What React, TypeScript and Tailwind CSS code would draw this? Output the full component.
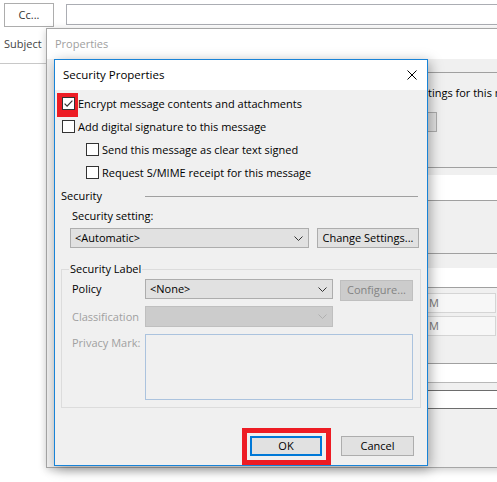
import React from 'react';

const ui = "font-['Open_Sans',sans-serif] text-[11px]";

const CheckBox = ({ checked }: { checked?: boolean }) => (
  <span className="relative z-10 flex h-[13px] w-[13px] shrink-0 items-center justify-center border border-[#333333] bg-white">
    {checked && (
      <svg width="11" height="11" viewBox="0 0 11 11">
        <path d="M1.6 5.6 L4.1 8.1 L9.4 2.6" fill="none" stroke="#333333" strokeWidth="1.2" />
      </svg>
    )}
  </span>
);

const Chevron = ({ color = '#333333' }: { color?: string }) => (
  <svg width="9" height="5" viewBox="0 0 9 5">
    <path d="M0.5 0.5 L4.5 4.5 L8.5 0.5" fill="none" stroke={color} strokeWidth="1" />
  </svg>
);

const Option = ({ label, checked, indent }: { label: string; checked?: boolean; indent?: boolean }) => (
  <div className={`flex h-[23px] items-center gap-[3px] ${indent ? 'pl-[31px]' : 'pl-[7px]'}`}>
    {checked ? (
      <span className="relative">
        <span className="absolute -left-[5px] -top-[4px] h-[24px] w-[21px] bg-[#ed1c24]" />
        <CheckBox checked />
      </span>
    ) : (
      <CheckBox />
    )}
    <span className="relative z-10 whitespace-nowrap leading-[16px] text-black">{label}</span>
  </div>
);

export default function App() {
  return (
    <div className={`relative h-[482px] w-[497px] overflow-hidden bg-white ${ui}`}>
      {/* compose header */}
      <div className="flex items-start pl-[4px] pt-[3px]">
        <button className="flex h-[24px] w-[50px] items-center justify-center border border-[#adadad] bg-white text-[#333333]">
          Cc...
        </button>
        <div className="ml-[12px] mt-[1px] h-[21px] flex-1 border border-r-0 border-[#abadb3] bg-white" />
      </div>
      <div className="h-[37px] w-[46px] border-b border-[#c8c8c8] pl-[4px] pt-[10px] leading-[14px] text-[#444444]">
        Subject
      </div>

      {/* Properties window */}
      <div className="absolute left-[46px] top-[28px] flex h-[440px] w-[470px] flex-col border border-[#a6a6a6] shadow-[0_2px_8px_rgba(0,0,0,0.2)]">
        <div className="flex h-[30px] items-center bg-white pl-[8px] text-[#a0a0a0]">Properties</div>
        <div className="flex flex-1 bg-[#f0f0f0]">
          <div className="w-[381px] shrink-0" />
          <div className="flex flex-1 flex-col overflow-hidden">
            <div className="mt-[13px] h-px bg-[#a0a0a0]" />
            <div className="mt-[13px] whitespace-nowrap leading-[14px] text-black">tings for this message.</div>
            <div className="mt-[12px] h-[20px] w-[9px] border border-l-0 border-[#adadad] bg-[#e1e1e1]" />
            <div className="mt-[35px] h-px bg-[#a0a0a0]" />
            <div className="mt-[7px] h-[26px] border-b border-[#a0a0a0] bg-white" />
            <div className="mt-[52px] h-px bg-[#a0a0a0]" />
            <div className="mt-[14px] h-[20px] border-b border-[#a0a0a0] bg-white" />
            <div className="mt-[5px] flex h-[20px] w-[68px] items-center border border-l-0 border-[#d5d5d5] bg-[#f7f7f7] pl-px leading-[14px] text-[#777777]">
              M
            </div>
            <div className="mt-[3px] flex h-[20px] w-[68px] items-center border border-l-0 border-[#d5d5d5] bg-[#f7f7f7] pl-px leading-[14px] text-[#777777]">
              M
            </div>
            <div className="mt-[27px] h-[20px] border-y border-t-[#a0a0a0] border-b-[#b8b8b8] bg-white" />
            <div className="mt-[7px] h-[19px] border-y border-[#6d6d6d] bg-white" />
          </div>
        </div>
      </div>

      {/* Security Properties dialog */}
      <div className="absolute left-[54px] top-[59px] flex h-[407px] w-[374px] flex-col border border-[#1883d7] bg-[#f0f0f0] shadow-[2px_3px_12px_rgba(0,0,0,0.35)]">
        <div className="flex h-[30px] shrink-0 items-center justify-between bg-white pl-[8px] pr-[10px]">
          <span className="text-[11.5px] text-black">Security Properties</span>
          <svg width="10" height="10" viewBox="0 0 10 10">
            <path d="M0.5 0.5 L9.5 9.5 M9.5 0.5 L0.5 9.5" stroke="#000000" strokeWidth="1" />
          </svg>
        </div>

        <div className="flex flex-col pt-[2px]">
          <Option label="Encrypt message contents and attachments" checked />
          <Option label="Add digital signature to this message" />
          <Option label="Send this message as clear text signed" indent />
          <Option label="Request S/MIME receipt for this message" indent />

          <div className="flex h-[24px] items-center pr-[9px]">
            <span className="w-[90px] pl-[6px] leading-[16px] text-black">Security</span>
            <span className="h-px flex-1 bg-[#a0a0a0]" />
          </div>
          <div className="h-[16px] pl-[17px] leading-[16px] text-black">Security setting:</div>
          <div className="mt-[4px] flex pl-[15px]">
            <div className="flex h-[20px] w-[239px] items-center justify-between border border-[#adadad] bg-[#e1e1e1] pl-[4px] pr-[5px] text-black">
              <span>&lt;Automatic&gt;</span>
              <Chevron />
            </div>
            <button className="ml-[8px] flex h-[20px] w-[102px] items-center justify-center border border-[#adadad] bg-[#e1e1e1] text-black">
              Change Settings...
            </button>
          </div>

          <fieldset className="mx-[6px] mt-[13px] border border-[#dcdcdc] pb-[7px]">
            <legend className="ml-[7px] px-px leading-[16px] text-black">Security Label</legend>
            <div className="mt-[2px] flex items-start">
              <span className="w-[83px] pl-[10px] leading-[20px] text-black">Policy</span>
              <div className="flex h-[20px] w-[188px] items-center justify-between border border-[#adadad] bg-[#e1e1e1] pl-[4px] pr-[5px] text-black">
                <span>&lt;None&gt;</span>
                <Chevron />
              </div>
              <button className="ml-[7px] mt-px flex h-[21px] w-[73px] items-center justify-center border border-[#bfbfbf] bg-[#cccccc] text-[#838383]">
                Configure...
              </button>
            </div>
            <div className="mt-[5px] flex items-start">
              <span className="w-[83px] pl-[10px] leading-[21px] text-[#a0a0a0]">Classification</span>
              <div className="flex h-[21px] w-[188px] items-center justify-end border border-[#bfbfbf] bg-[#cccccc] pr-[5px]">
                <Chevron color="#b0b0b0" />
              </div>
            </div>
            <div className="mt-[7px] flex items-start">
              <span className="w-[83px] pl-[10px] pt-px leading-[16px] text-[#a0a0a0]">Privacy Mark:</span>
              <div className="h-[66px] w-[268px] border border-[#abc3de] bg-[#f0f0f0]" />
            </div>
          </fieldset>

          <div className="mt-[28px] flex justify-end gap-[19px] pr-[13px]">
            <div className="relative">
              <span className="absolute -bottom-[9px] -left-[8px] -right-[9px] -top-[8px] border-[5px] border-[#ed1c24]" />
              <button className="flex h-[20px] w-[72px] items-center justify-center border-2 border-[#0078d7] bg-[#e1e1e1] text-black">
                OK
              </button>
            </div>
            <button className="flex h-[20px] w-[73px] items-center justify-center border border-[#adadad] bg-[#e1e1e1] text-black">
              Cancel
            </button>
          </div>
        </div>
      </div>
    </div>
  );
}
